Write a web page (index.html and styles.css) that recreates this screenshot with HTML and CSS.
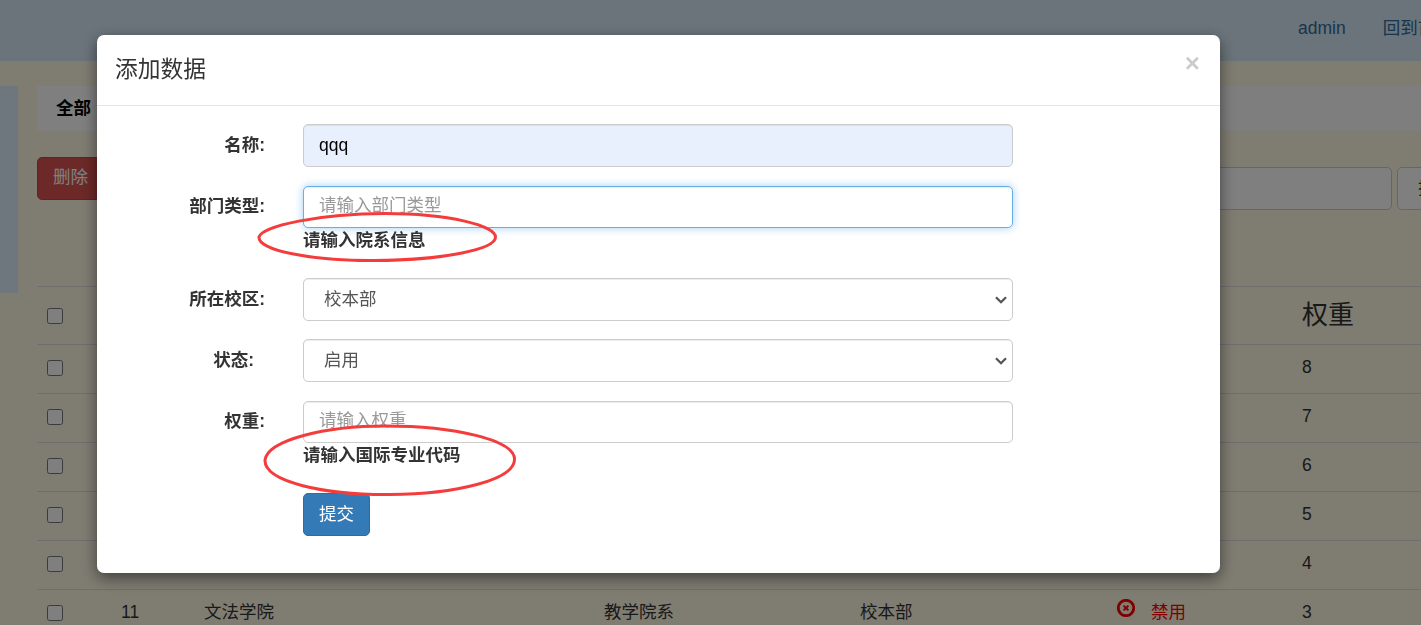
FILE: index.html
```html
<!DOCTYPE html>
<html lang="zh-CN">
<head>
<meta charset="utf-8">
<title>添加数据</title>
<link rel="stylesheet" href="styles.css">
</head>
<body>
<div class="page">
  <header class="topbar">
    <a class="nav-link" href="#">admin</a>
    <a class="nav-link" href="#">回到首页</a>
  </header>
  <div class="layout">
    <aside class="sidebar"></aside>
    <main class="content">
      <nav class="tabs"><span class="tab">全部</span></nav>
      <div class="toolbar">
        <button class="btn btn-danger" type="button">删除</button>
        <div class="search">
          <input class="search-input" type="text">
          <button class="btn btn-default" type="button">搜索</button>
        </div>
      </div>
      <table class="data-table">
        <colgroup>
          <col class="c-check"><col class="c-id"><col class="c-name"><col class="c-type"><col class="c-campus"><col class="c-status"><col class="c-weight">
        </colgroup>
        <thead>
          <tr><th><input class="check" type="checkbox"></th><th></th><th></th><th></th><th></th><th></th><th class="th-text">权重</th></tr>
        </thead>
        <tbody>
          <tr><td><input class="check" type="checkbox"></td><td></td><td></td><td></td><td></td><td></td><td>8</td></tr>
          <tr><td><input class="check" type="checkbox"></td><td></td><td></td><td></td><td></td><td></td><td>7</td></tr>
          <tr><td><input class="check" type="checkbox"></td><td></td><td></td><td></td><td></td><td></td><td>6</td></tr>
          <tr><td><input class="check" type="checkbox"></td><td></td><td></td><td></td><td></td><td></td><td>5</td></tr>
          <tr><td><input class="check" type="checkbox"></td><td></td><td></td><td></td><td></td><td></td><td>4</td></tr>
          <tr>
            <td><input class="check" type="checkbox"></td><td>11</td><td>文法学院</td><td>教学院系</td><td>校本部</td>
            <td class="status-off">
              <svg class="status-icon" viewBox="0 0 18 18" width="18" height="18" aria-hidden="true"><circle cx="9" cy="9" r="7.7" fill="none" stroke="currentColor" stroke-width="2.8"/><path d="M6.6 6.6l4.8 4.8M11.4 6.6l-4.8 4.8" fill="none" stroke="currentColor" stroke-width="2"/></svg><span>禁用</span>
            </td>
            <td>3</td>
          </tr>
        </tbody>
      </table>
    </main>
  </div>
</div>

<div class="backdrop"></div>

<div class="modal">
  <div class="dialog">
    <div class="dialog-header">
      <h4 class="dialog-title">添加数据</h4>
      <button class="close" type="button" aria-label="Close">×</button>
    </div>
    <form class="dialog-body">
      <div class="field field-name">
        <label class="field-label">名称:</label>
        <div class="field-control"><input class="control control-filled" type="text" value="qqq"></div>
      </div>
      <div class="field field-help">
        <label class="field-label label-help">部门类型:</label>
        <div class="field-control">
          <input class="control control-focus control-short" type="text" placeholder="请输入部门类型">
          <p class="help">请输入院系信息</p>
        </div>
      </div>
      <div class="field field-select">
        <label class="field-label">所在校区:</label>
        <div class="field-control select-wrap">
          <select class="control control-select"><option>校本部</option></select>
          <svg class="chevron" viewBox="0 0 12 8" width="12" height="8" aria-hidden="true"><path d="M1 1.2l5 5 5-5" fill="none" stroke="currentColor" stroke-width="2.3"/></svg>
        </div>
      </div>
      <div class="field field-state">
        <label class="field-label label-spaced">状态:</label>
        <div class="field-control select-wrap">
          <select class="control control-select"><option>启用</option></select>
          <svg class="chevron" viewBox="0 0 12 8" width="12" height="8" aria-hidden="true"><path d="M1 1.2l5 5 5-5" fill="none" stroke="currentColor" stroke-width="2.3"/></svg>
        </div>
      </div>
      <div class="field field-help">
        <label class="field-label label-help">权重:</label>
        <div class="field-control">
          <input class="control control-short" type="text" placeholder="请输入权重">
          <p class="help">请输入国际专业代码</p>
        </div>
      </div>
      <div class="field field-last">
        <div class="field-control field-offset"><button class="btn btn-primary" type="button">提交</button></div>
      </div>
    </form>
  </div>
  <svg class="marks" viewBox="0 0 1421 625" width="1421" height="625" aria-hidden="true">
    <path class="mark" d="M259 237C262 226 320 213.500 385 213.500C450 213.500 495.500 226 495.500 237C495.500 250 440 260 375 260.500C310 261 258 250 259 237Z"/>
    <path class="mark" d="M265 460C268 440 325 426 385 426C455 426 514 440 514.500 459C515 480 455 494 390 494.500C325 495 264 482 265 460Z"/>
  </svg>
</div>
</body>
</html>
```
FILE: styles.css
```css
* { box-sizing: border-box; }
html, body { height: 625px; margin: 0; overflow: hidden; }
body {
  font-family: "Liberation Sans", "Noto Sans CJK SC", sans-serif;
  font-size: 17.5px;
  line-height: 1.43;
  color: #333;
  background: #fef9e5;
}
input, select, button { font: inherit; }

/* underlying page */
.page { width: 1421px; }
.topbar {
  height: 61px;
  background: #d6e9f6;
  display: flex;
  justify-content: flex-start;
  align-items: center;
  padding: 0 0 3px 1298px;
  gap: 37px;
  white-space: nowrap;
}
.nav-link { color: #33689a; text-decoration: none; }
.layout { display: flex; margin-top: 25px; }
.sidebar { flex: none; width: 18px; height: 207px; background: #dceefa; }
.content { flex: none; width: 1384px; margin-left: 19px; }
.tabs { height: 45px; background: #fcfcfc; display: flex; }
.tab { padding: 0 19px; line-height: 45px; font-weight: 700; color: #000; background: #fff; }
.toolbar { display: flex; justify-content: space-between; align-items: flex-start; margin-top: 26px; height: 129px; }
.search { display: flex; gap: 5px; margin-top: 10px; margin-right: -53px; }
.search-input { width: 400px; height: 43px; border: 1px solid #ccc; border-radius: 5px; background: #fff; }
.btn { height: 43px; padding: 0 15px 2px; border: 1px solid transparent; border-radius: 5px; white-space: nowrap; }
.btn-danger { background: #d9534f; border-color: #d43f3a; color: #fff; }
.btn-default { background: #fff; border-color: #ccc; color: #333; padding: 0 20px; }
.btn-primary { background: #337ab7; border-color: #2e6da4; color: #fff; padding-bottom: 0; }

.data-table { width: 1384px; table-layout: fixed; border-collapse: collapse; }
.c-check { width: 74px; } .c-id { width: 83px; } .c-name { width: 400px; } .c-type { width: 256px; }
.c-campus { width: 257px; } .c-status { width: 185px; } .c-weight { width: 129px; }
.data-table th, .data-table td {
  padding: 0 0 0 10px;
  border-top: 1px solid #ddd;
  text-align: left;
  font-weight: 400;
}
.data-table th { vertical-align: middle; }
.data-table td { vertical-align: top; padding-top: 10px; line-height: 25px; }
.data-table thead tr { height: 58px; }
.data-table tbody tr { height: 49px; }
.th-text { font-size: 26px; }
.check { display: block; width: 16px; height: 16px; margin: 0; }
.data-table td .check { margin-top: 5px; }
.status-off { color: #ff0000; }
.status-icon { vertical-align: -1px; margin-right: 16px; position: relative; top: -2px; }

/* modal */
.backdrop { position: fixed; inset: 0; background: rgba(0, 0, 0, .5); }
.modal { position: fixed; inset: 0; overflow: hidden; }
.dialog {
  width: 1123px;
  height: 538px;
  margin: 35px 0 0 97px;
  background: #fff;
  border-radius: 7px;
  box-shadow: 0 5px 15px rgba(0, 0, 0, .5);
}
.dialog-header {
  height: 71px;
  padding: 18px 20px 0 18px;
  border-bottom: 1px solid #e5e5e5;
  display: flex;
  justify-content: space-between;
  align-items: flex-start;
}
.dialog-title { margin: 0; font-size: 22.75px; line-height: 33px; font-weight: 400; }
.close {
  padding: 0;
  border: 0;
  background: none;
  font-size: 26px;
  line-height: 21px;
  font-weight: 700;
  color: #000;
  opacity: .2;
}
.dialog-body { padding-top: 18px; }
.field { display: flex; }
.field-label { flex: none; width: 168px; margin-right: 38px; text-align: right; font-weight: 700; line-height: 42px; }
.label-help { line-height: 40px; }
.label-spaced { padding-right: 11px; }
.field-control { flex: none; width: 710px; }
.field-offset { margin-left: 206px; }
.field-name { margin-bottom: 19px; }
.field-select { margin-bottom: 18px; }
.field-state { margin-bottom: 19px; }
.field-help { margin-bottom: 26px; }
.control {
  display: block;
  width: 100%;
  height: 43px;
  padding: 6px 15px;
  border: 1px solid #ccc;
  border-radius: 5px;
  background: #fff;
  color: #555;
  box-shadow: inset 0 1px 1px rgba(0, 0, 0, .075);
  outline: none;
}
.control-short { height: 42px; padding: 4px 15px 8px; }
.control-filled { background: #e8f0fe; color: #000; }
.control-focus { border-color: #66afe9; box-shadow: inset 0 1px 1px rgba(0, 0, 0, .075), 0 0 8px rgba(102, 175, 233, .6); }
.control::placeholder { color: #999; opacity: 1; }
.select-wrap { position: relative; }
.control-select { appearance: none; padding: 6px 34px 6px 20px; }
.chevron { position: absolute; right: 6px; top: 18px; color: #555; pointer-events: none; }
.help { margin: 1px 0 0; height: 23px; line-height: 22px; font-weight: 700; color: #333; }
.marks { position: absolute; left: 0; top: 0; pointer-events: none; }
.mark { fill: none; stroke: #f43c3c; stroke-width: 3; }
```
